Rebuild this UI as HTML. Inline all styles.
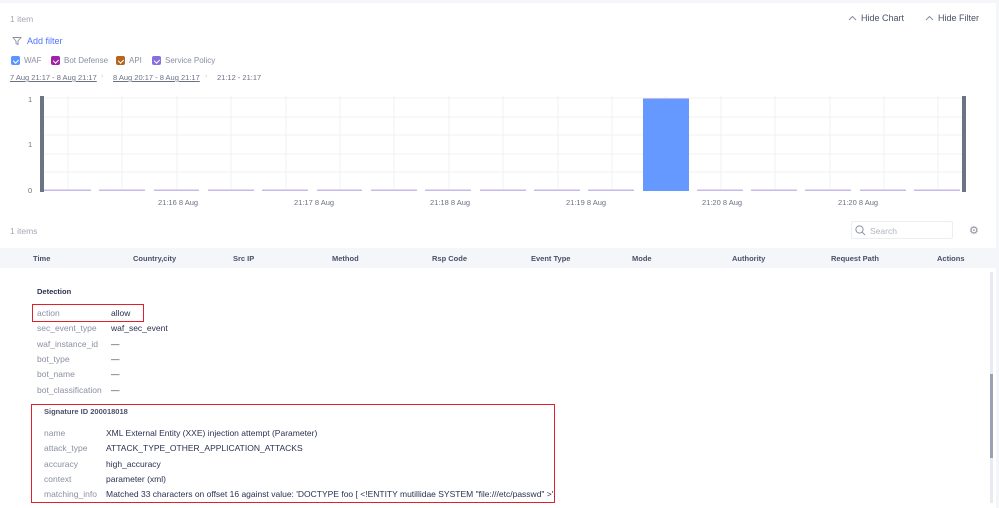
<!DOCTYPE html>
<html><head><style>
*{margin:0;padding:0;box-sizing:border-box}
body{width:999px;height:508px;overflow:hidden;background:#f5f6f9;font-family:"Liberation Sans",sans-serif;position:relative;color:#2b3150}
.main{position:absolute;left:0;top:3px;width:996px;height:505px;background:#fff}
.t{position:absolute;white-space:nowrap;font-size:8.5px}
.cb{position:absolute;width:9px;height:9px;border-radius:2px;top:56px}
.cb:after{content:"";position:absolute;left:2.5px;top:1.5px;width:2.5px;height:4px;border:solid #fff;border-width:0 1.2px 1.2px 0;transform:rotate(45deg)}
.lbl{color:#8a8fa3;font-size:8.5px}
.val{color:#2b3150;font-size:8.5px}
.h{font-weight:bold;color:#4a5068;font-size:7.5px;top:254px}
</style></head><body>
<div class="main"></div>
<div class="t" style="left:10px;top:14px;color:#a3a7b8">1 item</div>
<svg style="position:absolute;left:12px;top:36px" width="10" height="10" viewBox="0 0 10 10"><path d="M1 1.5h8l-3 3.5v3.5l-2-1v-2.5z" fill="none" stroke="#8a8fa3" stroke-width="0.9"/></svg>
<div class="t" style="left:27px;top:36px;color:#4f73ff;font-size:9px">Add filter</div>
<div class="cb" style="left:11px;background:#5b95ff"></div><div class="t" style="left:24px;top:56px;color:#8a8fa3;font-size:8px">WAF</div>
<div class="cb" style="left:51px;background:#a020a8"></div><div class="t" style="left:64px;top:56px;color:#8a8fa3;font-size:8px">Bot Defense</div>
<div class="cb" style="left:116px;background:#b5651d"></div><div class="t" style="left:129px;top:56px;color:#8a8fa3;font-size:8px">API</div>
<div class="cb" style="left:152px;background:#8a6ee0"></div><div class="t" style="left:165px;top:56px;color:#8a8fa3;font-size:8px">Service Policy</div>
<div class="t" style="left:10px;top:73px;color:#6b7185;text-decoration:underline;font-size:7.5px">7 Aug 21:17 - 8 Aug 21:17</div>
<div class="t" style="left:101px;top:73px;color:#ccc;font-size:7px">›</div>
<div class="t" style="left:113px;top:73px;color:#6b7185;text-decoration:underline;font-size:7.5px">8 Aug 20:17 - 8 Aug 21:17</div>
<div class="t" style="left:205px;top:73px;color:#ccc;font-size:7px">›</div>
<div class="t" style="left:217px;top:73px;color:#6b7185;font-size:7.5px">21:12 - 21:17</div>
<svg style="position:absolute;left:848px;top:15px" width="9" height="6"><path d="M1 5L4.5 1.5L8 5" fill="none" stroke="#8a8fa3" stroke-width="1"/></svg>
<div class="t" style="left:861px;top:13px;color:#4a5068;font-size:9px">Hide Chart</div>
<svg style="position:absolute;left:925px;top:15px" width="9" height="6"><path d="M1 5L4.5 1.5L8 5" fill="none" stroke="#8a8fa3" stroke-width="1"/></svg>
<div class="t" style="left:938px;top:13px;color:#4a5068;font-size:9px">Hide Filter</div>
<svg style="position:absolute;left:0;top:90px" width="999" height="120">
<g stroke="#eef0f4" stroke-width="1">
<line x1="42" y1="8" x2="964" y2="8"/><line x1="42" y1="27" x2="964" y2="27"/><line x1="42" y1="45" x2="964" y2="45"/><line x1="42" y1="64" x2="964" y2="64"/><line x1="42" y1="82" x2="964" y2="82"/>
<line x1="68" y1="6" x2="68" y2="100"/><line x1="122" y1="6" x2="122" y2="100"/><line x1="177" y1="6" x2="177" y2="100"/><line x1="231" y1="6" x2="231" y2="100"/><line x1="286" y1="6" x2="286" y2="100"/><line x1="340" y1="6" x2="340" y2="100"/><line x1="394" y1="6" x2="394" y2="100"/><line x1="449" y1="6" x2="449" y2="100"/><line x1="503" y1="6" x2="503" y2="100"/><line x1="558" y1="6" x2="558" y2="100"/><line x1="612" y1="6" x2="612" y2="100"/><line x1="666" y1="6" x2="666" y2="100"/><line x1="721" y1="6" x2="721" y2="100"/><line x1="775" y1="6" x2="775" y2="100"/><line x1="830" y1="6" x2="830" y2="100"/><line x1="884" y1="6" x2="884" y2="100"/><line x1="938" y1="6" x2="938" y2="100"/>
</g>
<g fill="#c8b8e6">
<rect x="44" y="99.5" width="47" height="1.5"/><rect x="99" y="99.5" width="46" height="1.5"/><rect x="154" y="99.5" width="45" height="1.5"/><rect x="208" y="99.5" width="46" height="1.5"/><rect x="262" y="99.5" width="46" height="1.5"/><rect x="317" y="99.5" width="45" height="1.5"/><rect x="371" y="99.5" width="46" height="1.5"/><rect x="425" y="99.5" width="46" height="1.5"/><rect x="480" y="99.5" width="46" height="1.5"/><rect x="534" y="99.5" width="46" height="1.5"/><rect x="588" y="99.5" width="46" height="1.5"/><rect x="697" y="99.5" width="46" height="1.5"/><rect x="751" y="99.5" width="46" height="1.5"/><rect x="805" y="99.5" width="46" height="1.5"/><rect x="860" y="99.5" width="46" height="1.5"/><rect x="914" y="99.5" width="46" height="1.5"/>
</g>
<rect x="643" y="8" width="46" height="93" fill="#6699ff"/>
<rect x="643" y="8" width="46" height="1" fill="#c8b8e6"/>
<rect x="40" y="6" width="4" height="96" fill="#6b7385"/>
<rect x="962" y="6" width="4" height="96" fill="#6b7385"/>
<g font-size="7.5" fill="#6b7185" font-family="Liberation Sans">
<text x="28" y="12">1</text><text x="28" y="57">1</text><text x="28" y="103">0</text>
<text x="158" y="115">21:16 8 Aug</text><text x="294" y="115">21:17 8 Aug</text><text x="430" y="115">21:18 8 Aug</text><text x="566" y="115">21:19 8 Aug</text><text x="702" y="115">21:20 8 Aug</text><text x="838" y="115">21:20 8 Aug</text>
</g>
</svg>
<div class="t" style="left:10px;top:226px;color:#a3a7b8">1 items</div>
<div style="position:absolute;left:851px;top:221px;width:102px;height:18px;border:1px solid #eceef2;border-radius:2px"></div>
<svg style="position:absolute;left:855px;top:225px" width="11" height="11"><circle cx="4.5" cy="4.5" r="3.6" fill="none" stroke="#8a8fa3" stroke-width="1"/><line x1="7.2" y1="7.2" x2="10" y2="10" stroke="#8a8fa3" stroke-width="1"/></svg>
<div class="t" style="left:870px;top:226px;color:#b0b4c2;font-size:8.5px">Search</div>
<div class="t" style="left:969px;top:224px;color:#8a8fa3;font-size:11px">⚙</div>
<div style="position:absolute;left:0;top:248px;width:996px;height:20px;background:#f5f6f9"></div>
<div class="t h" style="left:33px">Time</div>
<div class="t h" style="left:133px">Country,city</div>
<div class="t h" style="left:233px">Src IP</div>
<div class="t h" style="left:332px">Method</div>
<div class="t h" style="left:432px">Rsp Code</div>
<div class="t h" style="left:531px">Event Type</div>
<div class="t h" style="left:632px">Mode</div>
<div class="t h" style="left:732px">Authority</div>
<div class="t h" style="left:831px">Request Path</div>
<div class="t h" style="left:937px">Actions</div>
<div style="position:absolute;left:990px;top:272px;width:3px;height:231px;background:#e8eaf2"></div>
<div style="position:absolute;left:990px;top:374px;width:3px;height:84px;background:#9aa1b5"></div>
<div class="t" style="left:37px;top:287px;font-weight:bold;color:#2b3150;font-size:7.5px">Detection</div>
<div style="position:absolute;left:32px;top:304px;width:112px;height:18px;border:1.5px solid #e0202a"></div>
<div class="t lbl" style="left:37px;top:308px">action</div><div class="t val" style="left:111px;top:308px">allow</div>
<div class="t lbl" style="left:37px;top:323px">sec_event_type</div><div class="t val" style="left:111px;top:323px">waf_sec_event</div>
<div class="t lbl" style="left:37px;top:339px">waf_instance_id</div><div class="t val" style="left:111px;top:339px">—</div>
<div class="t lbl" style="left:37px;top:354px">bot_type</div><div class="t val" style="left:111px;top:354px">—</div>
<div class="t lbl" style="left:37px;top:369px">bot_name</div><div class="t val" style="left:111px;top:369px">—</div>
<div class="t lbl" style="left:37px;top:385px">bot_classification</div><div class="t val" style="left:111px;top:385px">—</div>
<div style="position:absolute;left:31px;top:404px;width:524px;height:99px;border:1.5px solid #e0202a"></div>
<div class="t" style="left:44px;top:407px;font-weight:bold;color:#4a5068;font-size:7.5px">Signature ID 200018018</div>
<div class="t lbl" style="left:44px;top:428px">name</div><div class="t val" style="left:106px;top:428px">XML External Entity (XXE) injection attempt (Parameter)</div>
<div class="t lbl" style="left:44px;top:443px">attack_type</div><div class="t val" style="left:106px;top:443px">ATTACK_TYPE_OTHER_APPLICATION_ATTACKS</div>
<div class="t lbl" style="left:44px;top:459px">accuracy</div><div class="t val" style="left:106px;top:459px">high_accuracy</div>
<div class="t lbl" style="left:44px;top:474px">context</div><div class="t val" style="left:106px;top:474px">parameter (xml)</div>
<div class="t lbl" style="left:44px;top:489px">matching_info</div><div class="t val" style="left:106px;top:489px">Matched 33 characters on offset 16 against value: 'DOCTYPE foo [ &lt;!ENTITY mutillidae SYSTEM "file:///etc/passwd" &gt;'.</div>
</body></html>
